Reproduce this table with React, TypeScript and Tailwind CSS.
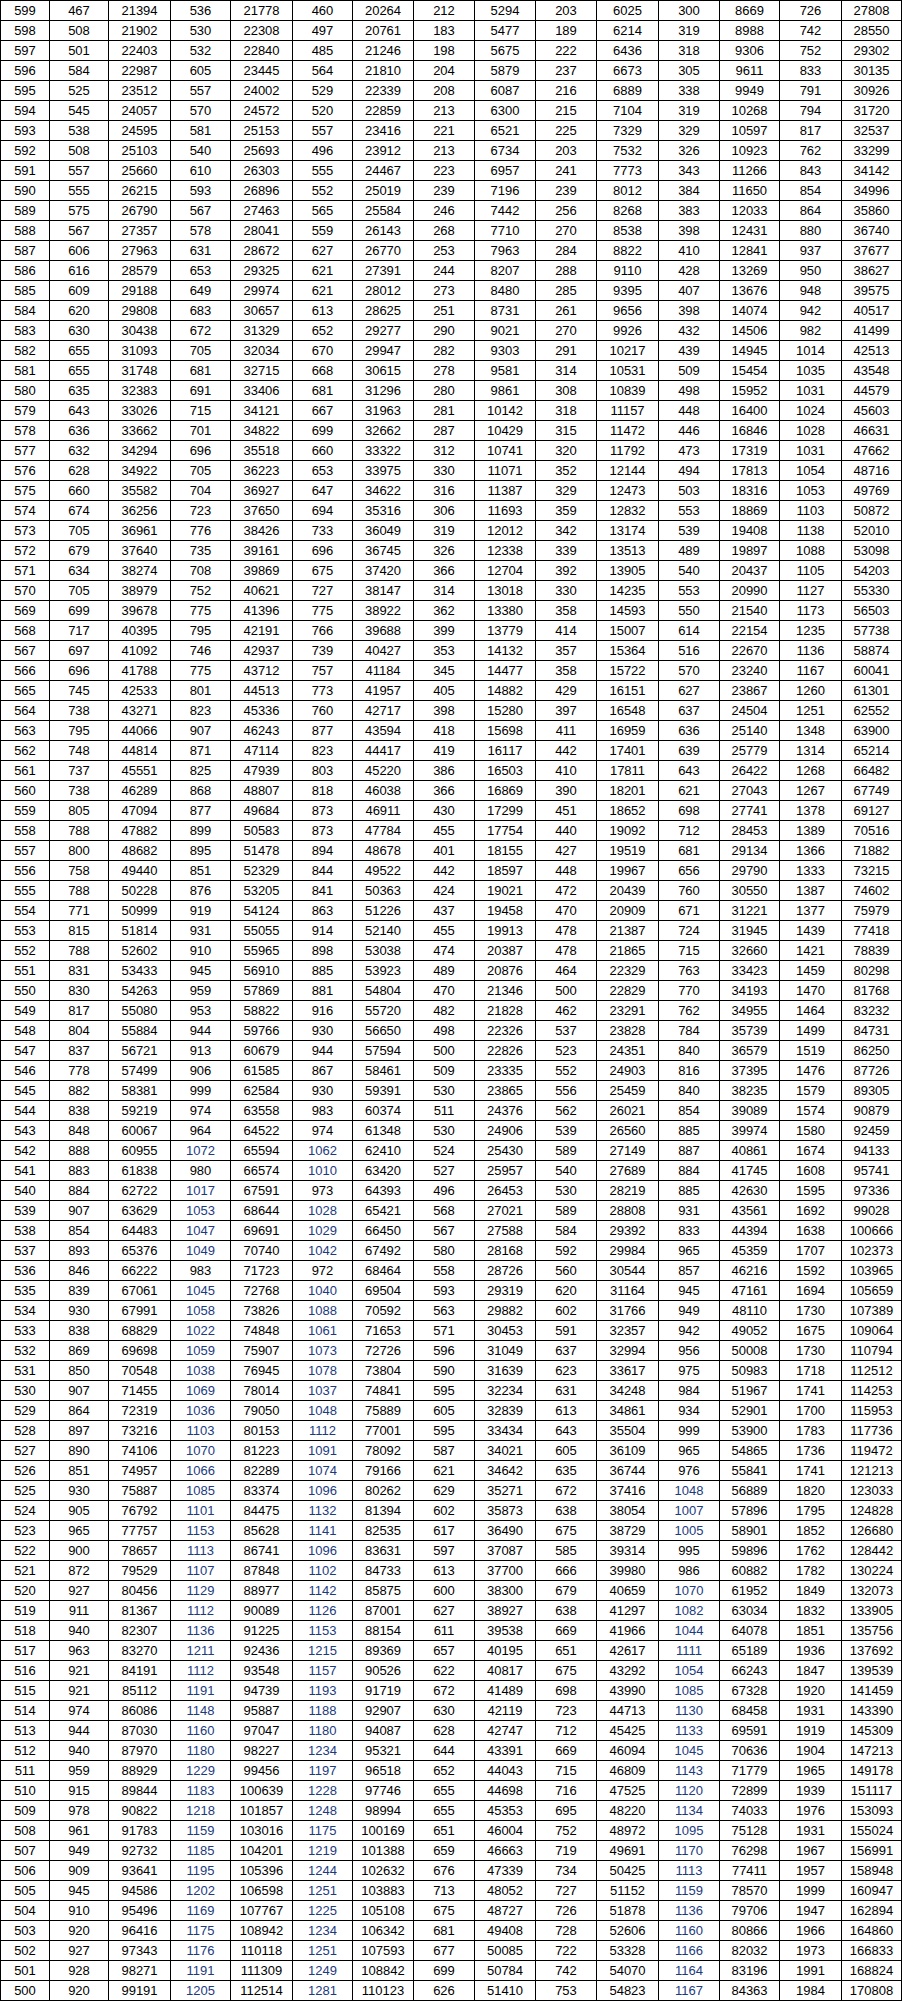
const raw = `599 467 21394 536 21778 460 20264 212 5294 203 6025 300 8669 726 27808
598 508 21902 530 22308 497 20761 183 5477 189 6214 319 8988 742 28550
597 501 22403 532 22840 485 21246 198 5675 222 6436 318 9306 752 29302
596 584 22987 605 23445 564 21810 204 5879 237 6673 305 9611 833 30135
595 525 23512 557 24002 529 22339 208 6087 216 6889 338 9949 791 30926
594 545 24057 570 24572 520 22859 213 6300 215 7104 319 10268 794 31720
593 538 24595 581 25153 557 23416 221 6521 225 7329 329 10597 817 32537
592 508 25103 540 25693 496 23912 213 6734 203 7532 326 10923 762 33299
591 557 25660 610 26303 555 24467 223 6957 241 7773 343 11266 843 34142
590 555 26215 593 26896 552 25019 239 7196 239 8012 384 11650 854 34996
589 575 26790 567 27463 565 25584 246 7442 256 8268 383 12033 864 35860
588 567 27357 578 28041 559 26143 268 7710 270 8538 398 12431 880 36740
587 606 27963 631 28672 627 26770 253 7963 284 8822 410 12841 937 37677
586 616 28579 653 29325 621 27391 244 8207 288 9110 428 13269 950 38627
585 609 29188 649 29974 621 28012 273 8480 285 9395 407 13676 948 39575
584 620 29808 683 30657 613 28625 251 8731 261 9656 398 14074 942 40517
583 630 30438 672 31329 652 29277 290 9021 270 9926 432 14506 982 41499
582 655 31093 705 32034 670 29947 282 9303 291 10217 439 14945 1014 42513
581 655 31748 681 32715 668 30615 278 9581 314 10531 509 15454 1035 43548
580 635 32383 691 33406 681 31296 280 9861 308 10839 498 15952 1031 44579
579 643 33026 715 34121 667 31963 281 10142 318 11157 448 16400 1024 45603
578 636 33662 701 34822 699 32662 287 10429 315 11472 446 16846 1028 46631
577 632 34294 696 35518 660 33322 312 10741 320 11792 473 17319 1031 47662
576 628 34922 705 36223 653 33975 330 11071 352 12144 494 17813 1054 48716
575 660 35582 704 36927 647 34622 316 11387 329 12473 503 18316 1053 49769
574 674 36256 723 37650 694 35316 306 11693 359 12832 553 18869 1103 50872
573 705 36961 776 38426 733 36049 319 12012 342 13174 539 19408 1138 52010
572 679 37640 735 39161 696 36745 326 12338 339 13513 489 19897 1088 53098
571 634 38274 708 39869 675 37420 366 12704 392 13905 540 20437 1105 54203
570 705 38979 752 40621 727 38147 314 13018 330 14235 553 20990 1127 55330
569 699 39678 775 41396 775 38922 362 13380 358 14593 550 21540 1173 56503
568 717 40395 795 42191 766 39688 399 13779 414 15007 614 22154 1235 57738
567 697 41092 746 42937 739 40427 353 14132 357 15364 516 22670 1136 58874
566 696 41788 775 43712 757 41184 345 14477 358 15722 570 23240 1167 60041
565 745 42533 801 44513 773 41957 405 14882 429 16151 627 23867 1260 61301
564 738 43271 823 45336 760 42717 398 15280 397 16548 637 24504 1251 62552
563 795 44066 907 46243 877 43594 418 15698 411 16959 636 25140 1348 63900
562 748 44814 871 47114 823 44417 419 16117 442 17401 639 25779 1314 65214
561 737 45551 825 47939 803 45220 386 16503 410 17811 643 26422 1268 66482
560 738 46289 868 48807 818 46038 366 16869 390 18201 621 27043 1267 67749
559 805 47094 877 49684 873 46911 430 17299 451 18652 698 27741 1378 69127
558 788 47882 899 50583 873 47784 455 17754 440 19092 712 28453 1389 70516
557 800 48682 895 51478 894 48678 401 18155 427 19519 681 29134 1366 71882
556 758 49440 851 52329 844 49522 442 18597 448 19967 656 29790 1333 73215
555 788 50228 876 53205 841 50363 424 19021 472 20439 760 30550 1387 74602
554 771 50999 919 54124 863 51226 437 19458 470 20909 671 31221 1377 75979
553 815 51814 931 55055 914 52140 455 19913 478 21387 724 31945 1439 77418
552 788 52602 910 55965 898 53038 474 20387 478 21865 715 32660 1421 78839
551 831 53433 945 56910 885 53923 489 20876 464 22329 763 33423 1459 80298
550 830 54263 959 57869 881 54804 470 21346 500 22829 770 34193 1470 81768
549 817 55080 953 58822 916 55720 482 21828 462 23291 762 34955 1464 83232
548 804 55884 944 59766 930 56650 498 22326 537 23828 784 35739 1499 84731
547 837 56721 913 60679 944 57594 500 22826 523 24351 840 36579 1519 86250
546 778 57499 906 61585 867 58461 509 23335 552 24903 816 37395 1476 87726
545 882 58381 999 62584 930 59391 530 23865 556 25459 840 38235 1579 89305
544 838 59219 974 63558 983 60374 511 24376 562 26021 854 39089 1574 90879
543 848 60067 964 64522 974 61348 530 24906 539 26560 885 39974 1580 92459
542 888 60955 1072 65594 1062 62410 524 25430 589 27149 887 40861 1674 94133
541 883 61838 980 66574 1010 63420 527 25957 540 27689 884 41745 1608 95741
540 884 62722 1017 67591 973 64393 496 26453 530 28219 885 42630 1595 97336
539 907 63629 1053 68644 1028 65421 568 27021 589 28808 931 43561 1692 99028
538 854 64483 1047 69691 1029 66450 567 27588 584 29392 833 44394 1638 100666
537 893 65376 1049 70740 1042 67492 580 28168 592 29984 965 45359 1707 102373
536 846 66222 983 71723 972 68464 558 28726 560 30544 857 46216 1592 103965
535 839 67061 1045 72768 1040 69504 593 29319 620 31164 945 47161 1694 105659
534 930 67991 1058 73826 1088 70592 563 29882 602 31766 949 48110 1730 107389
533 838 68829 1022 74848 1061 71653 571 30453 591 32357 942 49052 1675 109064
532 869 69698 1059 75907 1073 72726 596 31049 637 32994 956 50008 1730 110794
531 850 70548 1038 76945 1078 73804 590 31639 623 33617 975 50983 1718 112512
530 907 71455 1069 78014 1037 74841 595 32234 631 34248 984 51967 1741 114253
529 864 72319 1036 79050 1048 75889 605 32839 613 34861 934 52901 1700 115953
528 897 73216 1103 80153 1112 77001 595 33434 643 35504 999 53900 1783 117736
527 890 74106 1070 81223 1091 78092 587 34021 605 36109 965 54865 1736 119472
526 851 74957 1066 82289 1074 79166 621 34642 635 36744 976 55841 1741 121213
525 930 75887 1085 83374 1096 80262 629 35271 672 37416 1048 56889 1820 123033
524 905 76792 1101 84475 1132 81394 602 35873 638 38054 1007 57896 1795 124828
523 965 77757 1153 85628 1141 82535 617 36490 675 38729 1005 58901 1852 126680
522 900 78657 1113 86741 1096 83631 597 37087 585 39314 995 59896 1762 128442
521 872 79529 1107 87848 1102 84733 613 37700 666 39980 986 60882 1782 130224
520 927 80456 1129 88977 1142 85875 600 38300 679 40659 1070 61952 1849 132073
519 911 81367 1112 90089 1126 87001 627 38927 638 41297 1082 63034 1832 133905
518 940 82307 1136 91225 1153 88154 611 39538 669 41966 1044 64078 1851 135756
517 963 83270 1211 92436 1215 89369 657 40195 651 42617 1111 65189 1936 137692
516 921 84191 1112 93548 1157 90526 622 40817 675 43292 1054 66243 1847 139539
515 921 85112 1191 94739 1193 91719 672 41489 698 43990 1085 67328 1920 141459
514 974 86086 1148 95887 1188 92907 630 42119 723 44713 1130 68458 1931 143390
513 944 87030 1160 97047 1180 94087 628 42747 712 45425 1133 69591 1919 145309
512 940 87970 1180 98227 1234 95321 644 43391 669 46094 1045 70636 1904 147213
511 959 88929 1229 99456 1197 96518 652 44043 715 46809 1143 71779 1965 149178
510 915 89844 1183 100639 1228 97746 655 44698 716 47525 1120 72899 1939 151117
509 978 90822 1218 101857 1248 98994 655 45353 695 48220 1134 74033 1976 153093
508 961 91783 1159 103016 1175 100169 651 46004 752 48972 1095 75128 1931 155024
507 949 92732 1185 104201 1219 101388 659 46663 719 49691 1170 76298 1967 156991
506 909 93641 1195 105396 1244 102632 676 47339 734 50425 1113 77411 1957 158948
505 945 94586 1202 106598 1251 103883 713 48052 727 51152 1159 78570 1999 160947
504 910 95496 1169 107767 1225 105108 675 48727 726 51878 1136 79706 1947 162894
503 920 96416 1175 108942 1234 106342 681 49408 728 52606 1160 80866 1966 164860
502 927 97343 1176 110118 1251 107593 677 50085 722 53328 1166 82032 1973 166833
501 928 98271 1191 111309 1249 108842 699 50784 742 54070 1164 83196 1991 168824
500 920 99191 1205 112514 1281 110123 626 51410 753 54823 1167 84363 1984 170808`;

const rows = raw.split("\n").map((line) => line.trim().split(" "));

// four-digit counts in these columns show in dark blue
const blueCols = [3, 5, 11];

export default function App() {
  return (
    <div className="w-[902px] bg-white font-['Liberation_Sans',Arial,sans-serif] text-[13px] text-black">
      <div className="border-t border-l border-black">
        {rows.map((cells) => (
          <div
            key={cells[0]}
            className="grid grid-cols-[49px_59px_62px_60px_62px_60px_61px_61px_61px_61px_62px_61px_60px_62px_60px]"
          >
            {cells.map((v, i) => (
              <div
                key={i}
                className={`h-[20px] border-r border-b border-black flex items-center justify-center leading-none ${
                  blueCols.includes(i) && v.length >= 4 ? "text-[#1c3a7e]" : ""
                }`}
              >
                {v}
              </div>
            ))}
          </div>
        ))}
      </div>
    </div>
  );
}
